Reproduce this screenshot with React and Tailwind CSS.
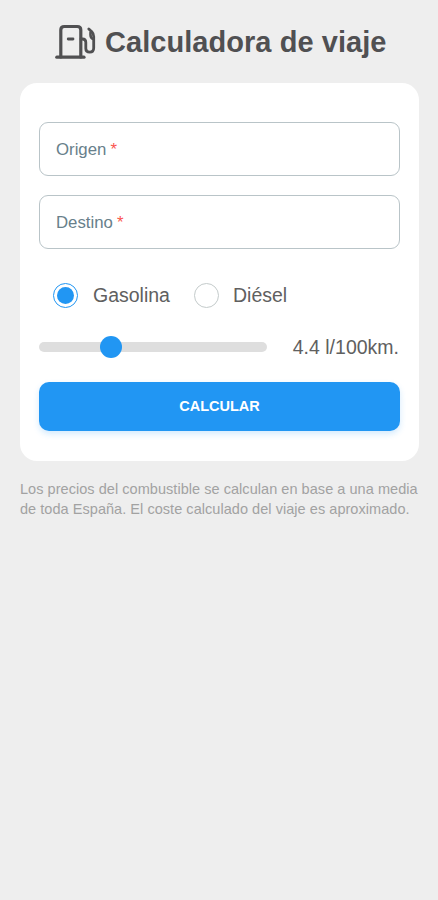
function FuelPump() {
  return (
    <svg className="h-9 w-[42px] shrink-0" viewBox="0 0 42 36" fill="none" stroke="#505052" strokeWidth="3.2" strokeLinecap="round" strokeLinejoin="round">
      <path d="M2.800 33.200H30" />
      <path d="M6.800 33V6Q6.800 2.500 10.300 2.500H23.300Q26.800 2.500 26.800 6V33" />
      <path d="M14.200 15H19" strokeWidth="2.8" />
      <path d="M27 15H28.500Q31.800 15 31.800 18.300V24.500Q31.800 28.200 35.700 28.200Q39.700 28.200 39.700 24V12.500Q39.700 9.800 37.800 7.800L34.800 5" strokeWidth="2.8" />
      <path d="M36.500 8.500V11Q36.600 14.500 39.500 15" strokeWidth="2.6" />
    </svg>
  );
}

function Field({ label, className }) {
  return (
    <label className={`flex items-center rounded-[9px] border border-[#b9c4c8] px-4 pt-0.5 text-[16.800px] text-[#68808b] ${className}`}>
      {label}
      <span className="ml-1 text-[#fa5550]">*</span>
    </label>
  );
}

export default function App() {
  return (
    <main className="h-[900px] bg-[#eeeeee] px-5 pt-6 font-['Liberation_Sans',Arial,sans-serif] text-[#606060]">
      <h1 className="flex h-9 items-center gap-2 whitespace-nowrap pl-[34px] text-[29px] font-bold leading-9 text-[#505052]">
        <FuelPump />
        <span className="ml-px tracking-[0.05px]">Calculadora de viaje</span>
      </h1>
      <section className="mt-[23px] h-[378px] w-[399px] rounded-[17px] bg-white px-[19px] pt-[39px]">
        <Field label="Origen" className="h-[54px]" />
        <Field label="Destino" className="mt-[19px] h-[54px]" />
        <div className="mt-[33px] flex h-[26px] items-center pl-[14px] text-[19.500px]">
          <span className="flex size-[25px] items-center justify-center rounded-full border border-[#2196f3]">
            <span className="size-[17px] rounded-full bg-[#2196f3]" />
          </span>
          <span className="ml-[15px] w-[76px] whitespace-nowrap pt-0.5">Gasolina</span>
          <span className="ml-[25px] size-[25px] rounded-full border border-[#c4cbcb]" />
          <span className="ml-[14px] pt-0.5">Diésel</span>
        </div>
        <div className="mt-[27px] flex h-6 items-center justify-between">
          <div className="flex h-[10px] w-[228px] items-center rounded-full bg-[#dedede] pl-[61px]">
            <span className="size-[22px] shrink-0 rounded-full bg-[#2196f3]" />
          </div>
          <span className="whitespace-nowrap pr-px pt-0.5 text-[19.500px]">4.4 l/100km.</span>
        </div>
        <button className="mt-[23px] block h-[49px] w-full rounded-[10px] bg-[#2196f3] text-[14.500px] font-bold text-white shadow-[0_3px_6px_rgba(33,150,243,0.2)]">CALCULAR</button>
      </section>
      <p className="mt-[19px] whitespace-nowrap text-[14.500px] leading-[19.500px] tracking-[0.045px] text-[#a2a2a2]">
        Los precios del combustible se calculan en base a una media<br />
        de toda España. El coste calculado del viaje es aproximado.
      </p>
    </main>
  );
}
